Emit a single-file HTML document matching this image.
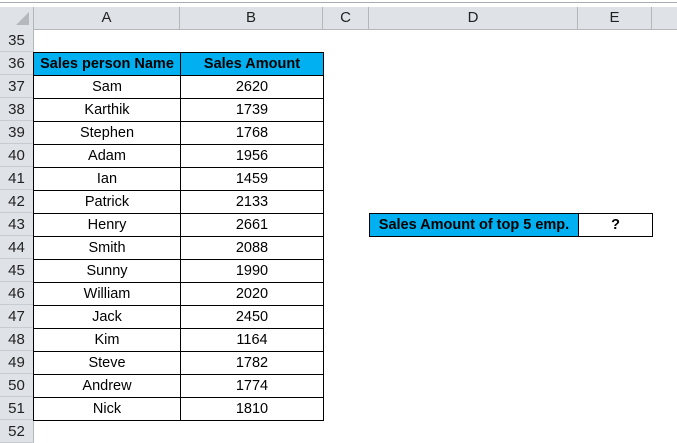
<!DOCTYPE html>
<html><head><style>
body{margin:0;width:677px;height:442px;overflow:hidden;background:#fff;font-family:"Liberation Sans",sans-serif;position:relative}
.a{position:absolute;box-sizing:border-box}
.ch{top:7px;height:23px;background:#dfe3e8;border-right:1px solid #b4b8bd;border-bottom:1px solid #b4b8bd;text-align:center;font-size:15px;line-height:22px;color:#222}
.rh{left:0;width:34px;height:23px;background:#dfe3e8;border-right:1px solid #b4b8bd;border-bottom:1px solid #c8ccd0;text-align:center;font-size:15px;line-height:23px;color:#222}
.c{height:24px;border:1px solid #000;text-align:center;font-size:14.5px;line-height:23px;color:#000}
.h{background:#00b0f0;font-weight:bold}
</style></head><body>
<div class="a" style="left:0;top:2px;width:677px;height:1px;background:#a8acb0"></div>
<div class="a" style="left:0;top:7px;width:677px;height:23px;background:#dfe3e8"></div>
<div class="a ch" style="left:0;width:34px"></div>
<div class="a" style="left:16px;top:12px;width:0;height:0;border-left:13px solid transparent;border-bottom:13px solid #b5b9bd"></div>
<div class="a ch" style="left:34px;width:146px">A</div>
<div class="a ch" style="left:180px;width:143px">B</div>
<div class="a ch" style="left:323px;width:46px">C</div>
<div class="a ch" style="left:369px;width:209px">D</div>
<div class="a ch" style="left:578px;width:74px">E</div>
<div class="a ch" style="left:652px;width:30px"></div>
<div id="rows"></div>
<script>
var names=["Sam","Karthik","Stephen","Adam","Ian","Patrick","Henry","Smith","Sunny","William","Jack","Kim","Steve","Andrew","Nick"];
var vals=[2620,1739,1768,1956,1459,2133,2661,2088,1990,2020,2450,1164,1782,1774,1810];
var h="";
for(var i=0;i<18;i++){var y=29+i*23;h+='<div class="a rh" style="top:'+y+'px">'+(35+i)+'</div>';}
h+='<div class="a c h" style="left:33px;top:52px;width:148px">Sales person Name</div>';
h+='<div class="a c h" style="left:180px;top:52px;width:144px">Sales Amount</div>';
for(var i=0;i<15;i++){var y=75+i*23;
h+='<div class="a c" style="left:33px;top:'+y+'px;width:148px">'+names[i]+'</div>';
h+='<div class="a c" style="left:180px;top:'+y+'px;width:144px">'+vals[i]+'</div>';}
h+='<div class="a c h" style="left:369px;top:213px;width:210px">Sales Amount of top 5 emp.</div>';
h+='<div class="a c" style="left:578px;top:213px;width:75px;font-weight:bold">?</div>';
document.getElementById("rows").innerHTML=h;
</script>
</body></html>
